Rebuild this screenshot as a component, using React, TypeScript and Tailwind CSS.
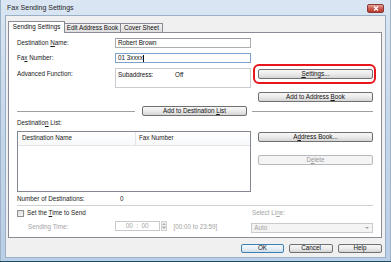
import React from 'react'

const font = "font-['Liberation_Sans',Arial,sans-serif]"

function Btn({
  children,
  className = '',
  disabled,
  primary,
}: {
  children: React.ReactNode
  className?: string
  disabled?: boolean
  primary?: boolean
}) {
  const look = disabled
    ? 'border-[#b5b9bd] bg-[#f4f4f4] text-[#9a9a9a]'
    : primary
      ? 'border-[#3c7fb1] bg-linear-to-b from-[#f5f9fc] via-[#e6eff6] to-[#cfdfeb] text-[#111]'
      : 'border-[#707070] bg-linear-to-b from-[#f7f7f7] via-[#ebebeb] to-[#d5d5d5] text-[#111]'
  return (
    <div
      className={`flex items-center justify-center rounded-[2px] border text-[6.3px] leading-none ${look} ${className}`}
    >
      <span>{children}</span>
    </div>
  )
}

function U({ children }: { children: React.ReactNode }) {
  return <span className="underline underline-offset-[1px] decoration-[0.5px]">{children}</span>
}

function Label({ children, className = '' }: { children: React.ReactNode; className?: string }) {
  return <div className={`text-[6.3px] leading-none text-[#1a1a1a] ${className}`}>{children}</div>
}

export default function App() {
  return (
    <div className={`w-[391px] h-[262px] overflow-hidden bg-[#1e4b60] ${font}`}>
      <div className="flex h-[261px] flex-col border-l border-r border-[#9fb3c8] bg-linear-to-b from-[#dae6f3] via-[#c4d6ea] to-[#b9cfe7]">
        {/* title bar */}
        <div className="flex h-[15px] items-center justify-between pl-[6px] pr-[6px]">
          <span className="text-[7px] leading-none text-[#1e1e1e]">Fax Sending Settings</span>
          <div className="mt-[1px] flex h-[9px] w-[17px] items-center justify-center rounded-[2px] border border-[#8a3a35] bg-linear-to-b from-[#e5a49c] via-[#cc5a4e] to-[#b8392c]">
            <svg width="6" height="5" viewBox="0 0 6 5">
              <path d="M1 0.5 L5 4.5 M5 0.5 L1 4.5" stroke="#fff" strokeWidth="1.3" />
            </svg>
          </div>
        </div>

        {/* client */}
        <div className="mx-[4px] mb-[3px] flex flex-1 flex-col border border-[#9aaec6] bg-[#f0f0f0] pl-[2px] pr-[3px] pt-[5px]">
          {/* tabs */}
          <div className="relative z-10 -mb-px flex h-[12px] items-end">
            <div className="flex h-[12px] w-[57px] items-center justify-center border border-b-0 border-[#898c95] bg-white pb-[1px] text-[6.3px] leading-none text-[#111]">
              Sending Settings
            </div>
            <div className="flex h-[10px] w-[56px] items-center justify-center border border-l-0 border-[#898c95] bg-linear-to-b from-[#f2f2f2] to-[#dedede] text-[6.3px] leading-none text-[#111]">
              Edit Address Book
            </div>
            <div className="flex h-[10px] w-[42px] items-center justify-center border border-l-0 border-[#898c95] bg-linear-to-b from-[#f2f2f2] to-[#dedede] text-[6.3px] leading-none text-[#111]">
              Cover Sheet
            </div>
          </div>

          {/* panel */}
          <div className="flex h-[206px] flex-col border border-[#898c95] bg-white pl-[8px] pr-[8px] pt-[5px]">
            <div className="flex h-[10px] items-center">
              <Label className="w-[98px]">
                Destination <U>N</U>ame:
              </Label>
              <div className="flex h-[10px] w-[136px] items-center border border-[#abadb3] border-t-[#9a9ca3] bg-white pl-[2px] text-[6.3px] leading-none text-[#111]">
                Robert Brown
              </div>
            </div>

            <div className="mt-[5px] flex h-[10px] items-center">
              <Label className="w-[98px]">
                Fa<U>x</U> Number:
              </Label>
              <div className="flex h-[10px] w-[136px] items-center border border-[#7da2ce] bg-white pl-[2px] text-[6.3px] leading-none text-[#111]">
                01 3xxxx
                <span className="ml-[0.5px] h-[7px] w-px bg-[#111]" />
              </div>
            </div>

            <div className="mt-[5px] flex h-[20px] items-start">
              <Label className="mt-[3px] w-[98px]">Advanced Function:</Label>
              <div className="flex h-[20px] w-[136px] items-start border border-[#c9cbd0] bg-white pl-[2px] pt-[3px] text-[6.3px] leading-none text-[#111]">
                <span className="w-[57px]">Subaddress:</span>
                <span>Off</span>
              </div>
              <div className="relative ml-[7px] mt-[1px]">
                <Btn className="h-[10px] w-[115px]">
                  <U>S</U>ettings...
                </Btn>
                <div className="absolute -left-[5px] -right-[3px] -top-[5px] -bottom-[5px] rounded-[6px] border-2 border-[#e8151b]" />
              </div>
            </div>

            <div className="mt-[4px] flex h-[10px]">
              <Btn className="ml-[241px] h-[10px] w-[115px]">
                Add to Address <U>B</U>ook
              </Btn>
            </div>

            <div className="mt-[4px] flex h-[10px] items-center">
              <div className="h-px w-[118px] bg-[#a0a0a0]" />
              <Btn className="ml-[7px] h-[10px] w-[105px]">
                Add to Destination <U>L</U>ist
              </Btn>
              <div className="ml-[5px] h-px w-[121px] bg-[#a0a0a0]" />
            </div>

            <Label className="mt-[4px] h-[8px]">
              Destinatio<U>n</U> List:
            </Label>

            <div className="mt-[3px] flex h-[61px] items-start">
              <div className="h-[61px] w-[234px] border border-[#828790] bg-white">
                <div className="flex h-[14px] items-center border-b border-[#e3e5e8] bg-linear-to-b from-white to-[#f7f8fa] text-[6.3px] leading-none text-[#222]">
                  <span className="w-[117px] pl-[4px]">Destination Name</span>
                  <span className="h-[13px] w-px bg-[#e3e5e8]" />
                  <span className="pl-[3px]">Fax Number</span>
                </div>
              </div>
              <div className="ml-[7px] flex flex-col">
                <Btn className="mt-[1px] h-[10px] w-[115px]">
                  A<U>d</U>dress Book...
                </Btn>
                <Btn disabled className="mt-[13px] h-[10px] w-[115px]">
                  D<U>e</U>lete
                </Btn>
              </div>
            </div>

            <div className="mt-[3px] flex h-[8px] items-center">
              <Label className="w-[103px]">Number of Destinations:</Label>
              <Label>0</Label>
            </div>

            <div className="mt-[2px] h-px w-[356px] bg-[#d0d0d0]" />

            <div className="mt-[3px] flex h-[8px] items-center">
              <div className="h-[7px] w-[7px] border border-[#8f8f8f] bg-linear-to-br from-[#dcdcdc] to-[#f8f8f8]" />
              <Label className="ml-[3px] w-[225px]">
                Set the <U>T</U>ime to Send
              </Label>
              <div className="text-[6.3px] leading-none text-[#a3a3a3]">
                Select Li<U>n</U>e:
              </div>
            </div>

            <div className="mt-[4px] flex h-[11px] items-start">
              <div className="ml-[11px] mt-[3px] w-[87px] text-[6.3px] leading-none text-[#a3a3a3]">
                Sending Time:
              </div>
              <div className="flex h-[10px] w-[45px] items-center justify-center border border-[#c8cace] bg-white text-[6.3px] leading-none text-[#a3a3a3]">
                00&nbsp;&nbsp;:&nbsp;&nbsp;00
              </div>
              <div className="ml-[1px] flex h-[10px] w-[6px] flex-col">
                <div className="flex flex-1 items-center justify-center border border-[#d0d0d0] bg-[#f2f2f2]">
                  <svg width="4" height="2" viewBox="0 0 4 2">
                    <path d="M0 2 L2 0 L4 2Z" fill="#b0b0b0" />
                  </svg>
                </div>
                <div className="flex flex-1 items-center justify-center border border-t-0 border-[#d0d0d0] bg-[#f2f2f2]">
                  <svg width="4" height="2" viewBox="0 0 4 2">
                    <path d="M0 0 L2 2 L4 0Z" fill="#b0b0b0" />
                  </svg>
                </div>
              </div>
              <div className="ml-[7px] mt-[3px] w-[78px] text-[6.3px] leading-none text-[#a3a3a3]">
                [00:00 to 23:59]
              </div>
              <div className="mt-[2px] flex h-[10px] w-[122px] items-center justify-between border border-[#c8cace] bg-[#f4f4f4] pl-[2px] pr-[3px] text-[6.3px] leading-none text-[#a3a3a3]">
                Auto
                <svg width="4" height="2" viewBox="0 0 4 2">
                  <path d="M0 0 L2 2 L4 0Z" fill="#a0a0a0" />
                </svg>
              </div>
            </div>
          </div>

          {/* dialog buttons */}
          <div className="mt-[6px] flex justify-end gap-[5px]">
            <Btn primary className="h-[9px] w-[43px]">
              OK
            </Btn>
            <Btn className="h-[9px] w-[44px]">Cancel</Btn>
            <Btn className="h-[9px] w-[44px]">Help</Btn>
          </div>
        </div>
      </div>
    </div>
  )
}
